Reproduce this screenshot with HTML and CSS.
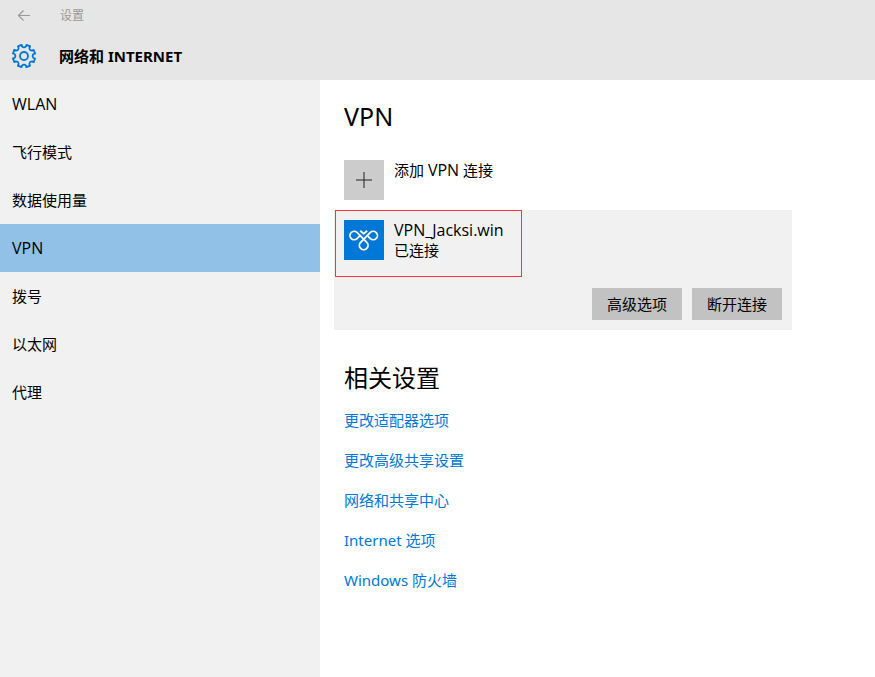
FILE: index.html
```html
<!DOCTYPE html>
<html lang="zh-CN">
<head>
<meta charset="utf-8">
<title>设置</title>
<link rel="stylesheet" href="styles.css">
</head>
<body>
<header class="header">
  <div class="titlebar">
    <button class="back" type="button" aria-label="返回">
      <svg width="14" height="12" viewBox="0 0 14 12" fill="none" stroke="currentColor" stroke-width="1.2"><path d="M13 5.5H1.5M6.5 .5L1.5 5.5l5 5"/></svg>
    </button>
    <span class="app-name">设置</span>
  </div>
  <div class="section">
    <svg class="gear" width="26" height="26" viewBox="-13 -13 26 26" fill="none" stroke="currentColor" stroke-width="1.8" stroke-linejoin="round" stroke-linecap="round">
      <defs><path id="tooth" d="M-2.5-11.1L-2-9.6Q0-7.6 2-9.6L2.5-11.1L6.1-9.6"/></defs>
      <use href="#tooth"/>
      <use href="#tooth" transform="rotate(45)"/>
      <use href="#tooth" transform="rotate(90)"/>
      <use href="#tooth" transform="rotate(135)"/>
      <use href="#tooth" transform="rotate(180)"/>
      <use href="#tooth" transform="rotate(225)"/>
      <use href="#tooth" transform="rotate(270)"/>
      <use href="#tooth" transform="rotate(315)"/>
      <circle r="4"/>
    </svg>
    <h1 class="section-name">网络和 INTERNET</h1>
  </div>
</header>
<div class="body">
  <nav class="sidebar">
    <a class="nav-item" href="#"><span class="latin">WLAN</span></a>
    <a class="nav-item" href="#">飞行模式</a>
    <a class="nav-item" href="#">数据使用量</a>
    <a class="nav-item selected" href="#" aria-current="page"><span class="latin">VPN</span></a>
    <a class="nav-item" href="#">拨号</a>
    <a class="nav-item" href="#">以太网</a>
    <a class="nav-item" href="#">代理</a>
  </nav>
  <main class="content">
    <h2 class="heading title">VPN</h2>
    <button class="entry add" type="button">
      <span class="tile plus"><svg width="16" height="16" viewBox="0 0 16 16" fill="none" stroke="currentColor"><path d="M0 8H16M8 0V16"/></svg></span>
      <span class="entry-text">添加 <span class="latin">VPN</span> 连接</span>
    </button>
    <section class="card">
      <div class="entry connection">
        <span class="tile vpn"><svg width="40" height="40" viewBox="0 0 40 40" fill="none" stroke="currentColor" stroke-width="1.8" stroke-linejoin="round"><path d="M16.2 10.8L19.7 13.8L23.2 10.8M16.6 15.2L13 18.6A4.2 4.2 0 1 1 13 12.4L22.8 22.4A4.3 4.3 0 1 1 16.6 22.4L26.4 12.4A4.2 4.2 0 1 1 26.4 18.6L23.8 16.2"/></svg></span>
        <span class="entry-text"><span class="latin">VPN_Jacksi.win</span><br>已连接</span>
      </div>
      <div class="actions">
        <button class="action" type="button">高级选项</button>
        <button class="action" type="button">断开连接</button>
      </div>
    </section>
    <h2 class="heading related">相关设置</h2>
    <ul class="links">
      <li><a href="#">更改适配器选项</a></li>
      <li><a href="#">更改高级共享设置</a></li>
      <li><a href="#">网络和共享中心</a></li>
      <li><a href="#">Internet 选项</a></li>
      <li><a href="#">Windows 防火墙</a></li>
    </ul>
  </main>
</div>
</body>
</html>
```
FILE: styles.css
```css
* {
  box-sizing: border-box;
}

body {
  margin: 0;
  min-height: 100vh;
  display: flex;
  flex-direction: column;
  background: #fff;
  color: #000;
  font: 15px/20px "Noto Sans", "Noto Sans CJK SC", sans-serif;
}

button {
  border: 0;
  padding: 0;
  background: none;
  color: inherit;
  font: inherit;
}

a {
  text-decoration: none;
}

.latin {
  font-family: "Open Sans", sans-serif;
  font-size: 16px;
  line-height: 16px;
}

.header {
  background: #e6e6e6;
}

.titlebar {
  display: flex;
  align-items: center;
  height: 32px;
  color: #999;
  font-size: 12px;
}

.back {
  display: flex;
  align-items: center;
  justify-content: center;
  width: 48px;
  height: 32px;
}

.app-name {
  padding-left: 12px;
}

.section {
  display: flex;
  align-items: center;
  gap: 22px;
  height: 48px;
  padding-left: 11px;
}

.gear {
  color: #0078d7;
}

.section-name {
  margin: 0;
  font-size: 15px;
  font-weight: 700;
}

.body {
  flex: 1;
  display: flex;
}

.sidebar {
  flex: none;
  width: 320px;
  background: #f1f1f1;
}

.nav-item {
  display: flex;
  align-items: center;
  height: 48px;
  padding: 0 12px;
  color: inherit;
}

.nav-item.selected {
  background: #91c1e7;
}

.content {
  flex: 1;
  max-width: 496px;
  padding: 20px 24px;
}

.heading {
  margin: 0;
  font-size: 24px;
  font-weight: 400;
  line-height: 32px;
}

.title {
  font-size: 25px;
}

.entry {
  display: flex;
  align-items: flex-start;
  gap: 10px;
  text-align: left;
}

.add {
  margin: 28px 0 10px;
}

.tile {
  flex: none;
  display: flex;
  align-items: center;
  justify-content: center;
  width: 40px;
  height: 40px;
}

.plus {
  background: #ccc;
  color: #222;
}

.vpn {
  background: #0078d7;
  color: #fff;
}

.card {
  margin-left: -10px;
  padding-left: 1px;
  background: #f1f1f1;
}

.connection {
  width: 187px;
  height: 67px;
  padding: 9px 8px 0;
  border: 1px solid #f33;
}

.actions {
  display: flex;
  justify-content: flex-end;
  gap: 10px;
  padding: 11px 10px 10px;
}

.action {
  width: 90px;
  height: 32px;
  background: #c2c2c2;
}

.related {
  margin-top: 32px;
}

.links {
  margin: 16px 0 0;
  padding: 0;
  list-style: none;
  display: grid;
  gap: 20px;
}

.links a {
  color: #0078d7;
}
```
